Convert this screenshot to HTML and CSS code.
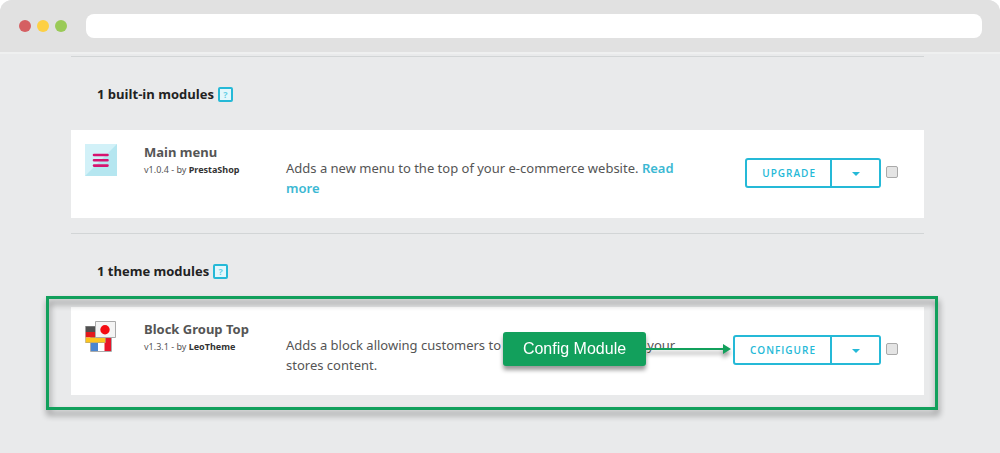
FILE: index.html
```
<!DOCTYPE html>
<html lang="en">
	<head>
		<meta charset="utf-8">
		<title>Modules</title>
		<link rel="stylesheet" href="styles.css">
	</head>
	<body>
<div class="browser">
	<header class="bar">
		<span class="dot red"></span>
		<span class="dot yellow"></span>
		<span class="dot green"></span>
		<input class="address" type="text" aria-label="Address">
	</header>

	<main class="page">
		<section class="group">
			<h2>1 built-in modules <button class="help" type="button" aria-label="Help">?</button></h2>
			<div class="module">
				<svg class="logo" viewBox="0 0 32 32">
					<path fill="#b5e6f0" d="M0 0h32v32H0z"/>
					<path fill="#d2f1f8" d="M0 0h32L0 32z"/>
					<path stroke="#d6136f" stroke-width="2.6" stroke-linecap="round" d="M9 11h13.500M9 16.300h13.500M9 21.600h13.500"/>
				</svg>
				<div class="name">
					<h3>Main menu</h3>
					<p>v1.0.4 - by <b>PrestaShop</b></p>
				</div>
				<p class="description">Adds a new menu to the top of your e-commerce website. <a href="#">Read more</a></p>
				<div class="actions">
					<div class="buttons">
						<button type="button">UPGRADE</button>
						<button class="more" type="button" aria-label="More actions"><span class="caret"></span></button>
					</div>
					<input type="checkbox" aria-label="Select Main menu">
				</div>
			</div>
		</section>

		<section class="group">
			<h2>1 theme modules <button class="help" type="button" aria-label="Help">?</button></h2>
			<div class="module">
				<svg class="logo" viewBox="0 0 32 32">
					<path fill="#fff" stroke="#aaa" d="M5.500 15.500h21v15h-21z"/>
					<path fill="#4b86cf" d="M6 16h7v14H6z"/>
					<path fill="#e8152a" d="M19.500 16H26v14h-6.500z"/>
					<path fill="#505050" d="M.5 5h20v6H.5z"/>
					<path fill="#e3191c" d="M.5 11h20v5.500H.5z"/>
					<path fill="#fcc51f" d="M.5 16.500h20V22H.5z"/>
					<path fill="none" stroke="#999" stroke-opacity=".5" d="M.5 5.500h20v16H.5z"/>
					<path fill="#f4f4f4" stroke="#aaa" d="M10.500.5h20v16h-20z"/>
					<circle cx="20" cy="8.700" r="4.700" fill="#f40c12"/>
				</svg>
				<div class="name">
					<h3>Block Group Top</h3>
					<p>v1.3.1 - by <b>LeoTheme</b></p>
				</div>
				<p class="description">Adds a block allowing customers to find and browse any of your stores content.</p>
				<div class="actions">
					<div class="buttons">
						<button type="button">CONFIGURE</button>
						<button class="more" type="button" aria-label="More actions"><span class="caret"></span></button>
					</div>
					<input type="checkbox" aria-label="Select Block Group Top">
				</div>
				<div class="frame"></div>
				<div class="callout">
					<span class="label">Config Module</span>
					<svg class="arrow" viewBox="0 0 85 10"><path fill="#12a05c" d="M0 4h77V0l8 5-8 5V6H0z"/></svg>
				</div>
			</div>
		</section>
	</main>
</div>
	</body>
</html>
```

FILE: styles.css
```
* { box-sizing: border-box; }
body {
	background-color: #fff;
	color: #555;
	font: 13px/20px "Noto Sans", "Open Sans", sans-serif;
	margin: 0;
	}
h2, h3, p { margin: 0; }
h2, button { font-family: "Open Sans", sans-serif; }
button { cursor: pointer; }
.browser {
	background-color: #e9eaeb;
	border-radius: 12px 12px 0 0;
	min-height: 100vh;
	overflow: hidden;
	}

/* browser bar */
.bar {
	align-items: center;
	background-color: #e1e1e1;
	display: flex;
	gap: 6px;
	height: 52px;
	padding: 0 18px 0 19px;
	}
.dot {
	border-radius: 50%;
	height: 12px;
	width: 12px;
	}
.red { background-color: #d55f62; }
.yellow { background-color: #fdd045; }
.green { background-color: #9aca57; }
.address {
	background-color: #fff;
	border: 0;
	border-radius: 8px;
	flex: 1;
	height: 24px;
	margin-left: 13px;
	padding: 0 10px;
	}

/* module list */
.page {
	border-top: 2px solid #eff0f0;
	padding: 2px 76px 43px 71px;
	}
.group {
	border-top: 1px solid #d2d5d6;
	padding-bottom: 15px;
	}
.group h2 {
	align-items: center;
	color: #222;
	display: flex;
	font-size: 13px;
	font-weight: 700;
	gap: 4px;
	height: 73px;
	padding: 0 26px;
	}
.help {
	background-color: #e3f7fc;
	border: 2px solid #25b9d7;
	border-radius: 2px;
	color: #66cfe5;
	font-size: 9px;
	font-weight: 700;
	height: 15px;
	line-height: 11px;
	margin-top: 2px;
	padding: 0;
	width: 15px;
	}
.module {
	background-color: #fff;
	display: flex;
	min-height: 88px;
	padding: 14px 26px 14px 14px;
	position: relative;
	}
.logo {
	flex: none;
	height: 32px;
	width: 32px;
	}
.name {
	flex: none;
	margin-left: 27px;
	width: 142px;
	}
.name h3 {
	font-size: 13px;
	font-weight: 700;
	line-height: 16px;
	}
.name p {
	font-size: 9px;
	}
.name b { color: #333; }
.description {
	flex: 0 1 400px;
	padding-top: 14px;
	}
.description a {
	color: #3bb8d3;
	font-weight: 600;
	text-decoration: none;
	}
.actions {
	align-items: flex-start;
	display: flex;
	flex: none;
	gap: 5px;
	margin-left: auto;
	padding-top: 14px;
	}
.actions input {
	appearance: none;
	background-color: #e4e4e4;
	border: 1px solid #aaa;
	border-radius: 2px;
	height: 12px;
	margin: 8px 0 0;
	width: 12px;
	}
.buttons { display: flex; }
.buttons button {
	background-color: #fff;
	border: 2px solid #25b9d7;
	border-radius: 3px 0 0 3px;
	color: #25b9d7;
	font-size: 10px;
	font-weight: 600;
	height: 30px;
	letter-spacing: 1px;
	padding: 0 14px 0 15px;
	}
.buttons .more {
	border-left: 0;
	border-radius: 0 3px 3px 0;
	padding: 0;
	width: 49px;
	}
.caret {
	border: 4px solid transparent;
	border-bottom: 0;
	border-top-color: #25b9d7;
	display: inline-block;
	vertical-align: middle;
	}

/* highlight over the module */
.frame {
	border: 3px solid #12a05c;
	bottom: -15px;
	filter: drop-shadow(1px 5px 3px rgba(0, 0, 0, .45));
	left: -25px;
	pointer-events: none;
	position: absolute;
	right: -14px;
	top: -11px;
	}
.callout {
	align-items: center;
	display: flex;
	filter: drop-shadow(0 4px 2px rgba(0, 0, 0, .4));
	position: absolute;
	right: 193px;
	top: 25px;
	}
.label {
	background-color: #12a05c;
	border-radius: 3px;
	color: #fff;
	font: 16px/34px "Liberation Sans", sans-serif;
	text-align: center;
	width: 143px;
	}
.arrow {
	height: 10px;
	width: 85px;
	}
```
